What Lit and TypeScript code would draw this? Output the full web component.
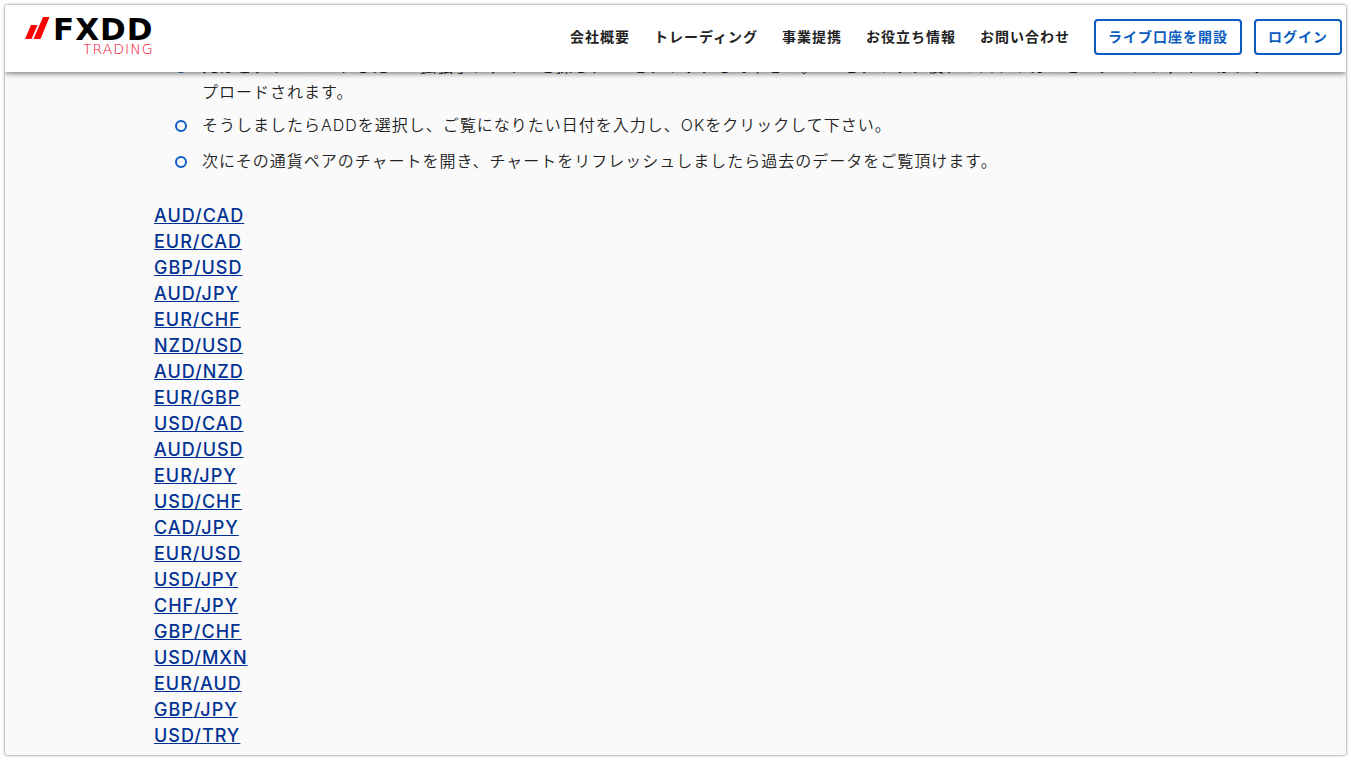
import { LitElement, html, css } from "lit";
import { customElement } from "lit/decorators.js";

const NAV = ["会社概要", "トレーディング", "事業提携", "お役立ち情報", "お問い合わせ"];

const STEPS = [
  "先ほどダウンロードした.hst拡張子ファイルを探し、OKをクリックして下さい。OKをクリック後、ヒストリカルセンターにファイルがアップロードされます。",
  "そうしましたらADDを選択し、ご覧になりたい日付を入力し、OKをクリックして下さい。",
  "次にその通貨ペアのチャートを開き、チャートをリフレッシュしましたら過去のデータをご覧頂けます。",
];

const PAIRS = [
  "AUD/CAD", "EUR/CAD", "GBP/USD", "AUD/JPY", "EUR/CHF", "NZD/USD", "AUD/NZD",
  "EUR/GBP", "USD/CAD", "AUD/USD", "EUR/JPY", "USD/CHF", "CAD/JPY", "EUR/USD",
  "USD/JPY", "CHF/JPY", "GBP/CHF", "USD/MXN", "EUR/AUD", "GBP/JPY", "USD/TRY",
];

@customElement("app-root")
export class AppRoot extends LitElement {
  static styles = css`
    :host {
      display: block;
      box-sizing: border-box;
      height: 100vh;
      padding: 5px;
      background: #fff;
      color: #222;
      font-family: Inter, "Noto Sans CJK JP", sans-serif;
      font-size: 16px;
      letter-spacing: 1px;
    }
    .page {
      display: flex;
      flex-direction: column;
      height: 100%;
      overflow: hidden;
      border-radius: 2px;
      background: #fafafa;
      box-shadow: 0 0 3px rgba(0, 0, 0, 0.6);
    }
    .header {
      position: relative;
      z-index: 1;
      flex: none;
      display: flex;
      justify-content: space-between;
      align-items: flex-start;
      padding: 8px 4px 17px 20px;
      background: #fff;
      box-shadow: 0 1px 6px rgba(0, 0, 0, 0.6);
    }
    .logo {
      display: flex;
      gap: 2px;
      padding-top: 2px;
      color: #000;
      text-decoration: none;
      font-family: "DejaVu Sans", sans-serif;
    }
    .bars {
      flex: none;
      margin-top: 2px;
    }
    .words {
      display: flex;
      flex-direction: column;
      align-items: flex-end;
    }
    .brand {
      font-size: 31px;
      font-weight: 700;
      line-height: 28px;
    }
    .sub {
      font-size: 14px;
      font-weight: 200;
      line-height: 12px;
      color: #f5001d;
    }
    .nav {
      display: flex;
      align-items: center;
      gap: 24px;
      padding-top: 6px;
      font-size: 14px;
      font-weight: 700;
    }
    .nav a {
      padding-bottom: 2px;
      color: #222;
      text-decoration: none;
      white-space: nowrap;
    }
    .actions {
      display: flex;
      gap: 12px;
    }
    .btn {
      box-sizing: border-box;
      height: 36px;
      padding: 0 12px 2px;
      border: 2px solid #0b5cbf;
      border-radius: 4px;
      background: #fff;
      color: #0b5cbf;
      font: inherit;
      letter-spacing: inherit;
      white-space: nowrap;
    }
    .content {
      flex: 1;
      min-height: 0;
      display: flex;
      flex-direction: column;
      justify-content: flex-end;
      padding: 0 68px 6px 149px;
    }
    .steps {
      margin: 0 0 23px;
      padding: 0;
      list-style: none;
    }
    .step {
      box-sizing: border-box;
      display: flex;
      gap: 15px;
      min-height: 36px;
      padding: 4px 0 3px 21px;
      line-height: 26px;
      font-weight: 350;
    }
    .step::before {
      content: "";
      flex: none;
      box-sizing: border-box;
      width: 12px;
      height: 12px;
      margin-top: 8px;
      border: 2px solid #0b5cc8;
      border-radius: 50%;
    }
    .pairs {
      margin: 0;
      padding: 0;
      list-style: none;
      font-size: 18px;
      font-weight: 500;
      line-height: 26px;
    }
    .pairs a {
      color: #023293;
      text-decoration: underline 1px #023293;
      text-underline-offset: 1px;
      text-decoration-skip-ink: none;
    }
  `;

  render() {
    return html`
      <div class="page">
        <header class="header">
          <a class="logo" href="#">
            <svg class="bars" width="26" height="23" viewBox="0 0 26 23" aria-hidden="true">
              <path fill="#f00" d="M6 8h6.500L6.500 22H0zM18 0h6.500L15.500 22H8.500z" />
            </svg>
            <span class="words">
              <span class="brand">FXDD</span>
              <span class="sub">TRADING</span>
            </span>
          </a>
          <nav class="nav">
            ${NAV.map((label) => html`<a href="#">${label}</a>`)}
            <div class="actions">
              <button class="btn" type="button">ライブ口座を開設</button>
              <button class="btn" type="button">ログイン</button>
            </div>
          </nav>
        </header>
        <main class="content">
          <ul class="steps">
            ${STEPS.map((text) => html`<li class="step"><span>${text}</span></li>`)}
          </ul>
          <ul class="pairs">
            ${PAIRS.map((pair) => html`<li><a href="#">${pair}</a></li>`)}
          </ul>
        </main>
      </div>
    `;
  }
}
